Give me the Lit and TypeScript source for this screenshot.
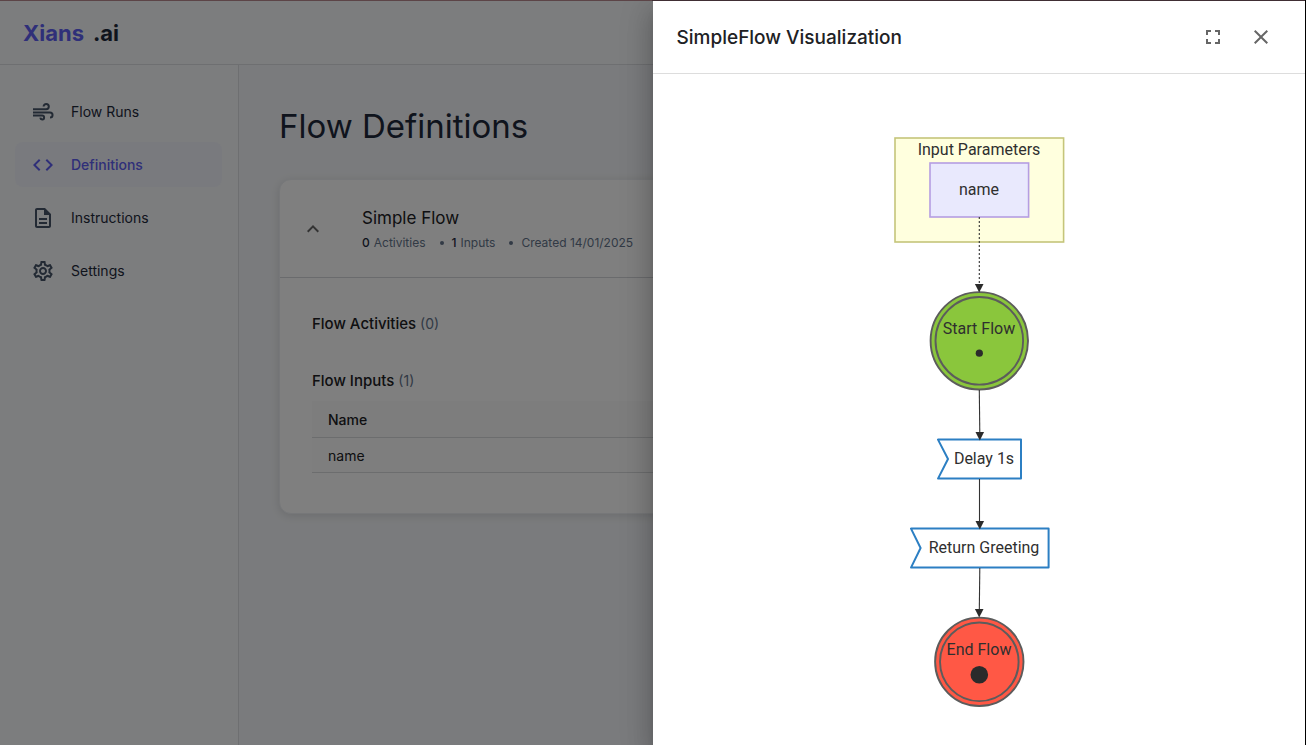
import { LitElement, html, svg, css } from "lit";
import { customElement, property } from "lit/decorators.js";
import { classMap } from "lit/directives/class-map.js";

const ICONS = {
  runs: svg`<g fill="none" stroke="currentColor" stroke-width="2"><path d="M2 9.2h13.2a2.6 2.6 0 1 0-2.6-2.6"/><path d="M2 12.4h17a2.2 2.2 0 0 1 0 5.1"/><path d="M2 15.6h9.2a1.9 1.9 0 1 1-1.9 2.1"/></g>`,
  code: svg`<path d="M9.4 16.6 4.8 12l4.6-4.6L8 6l-6 6 6 6 1.4-1.4zm5.2 0 4.6-4.6-4.6-4.6L16 6l6 6-6 6-1.4-1.4z"/>`,
  doc: svg`<path d="M8 16h8v2H8zm0-4h8v2H8zm6-10H6c-1.1 0-2 .9-2 2v16c0 1.1.89 2 1.99 2H18c1.1 0 2-.9 2-2V8l-6-6zm4 18H6V4h7v5h5v11z"/>`,
  settings: svg`<path d="M19.43 12.98c.04-.32.07-.64.07-.98s-.03-.66-.07-.98l2.11-1.65c.19-.15.24-.42.12-.64l-2-3.46c-.09-.16-.26-.25-.44-.25-.06 0-.12.01-.17.03l-2.49 1c-.52-.4-1.08-.73-1.69-.98l-.38-2.65C14.46 2.18 14.25 2 14 2h-4c-.25 0-.46.18-.49.42l-.38 2.65c-.61.25-1.17.59-1.69.98l-2.49-1c-.06-.02-.12-.03-.18-.03-.17 0-.34.09-.43.25l-2 3.46c-.13.22-.07.49.12.64l2.11 1.65c-.04.32-.07.65-.07.98s.03.66.07.98l-2.11 1.65c-.19.15-.24.42-.12.64l2 3.46c.09.16.26.25.44.25.06 0 .12-.01.17-.03l2.49-1c.52.4 1.08.73 1.69.98l.38 2.65c.03.24.24.42.49.42h4c.25 0 .46-.18.49-.42l.38-2.65c.61-.25 1.17-.59 1.69-.98l2.49 1c.06.02.12.03.18.03.17 0 .34-.09.43-.25l2-3.46c.12-.22.07-.49-.12-.64l-2.11-1.65zm-1.98-1.71c.04.31.05.52.05.73 0 .21-.02.43-.05.73l-.14 1.13.89.7 1.08.84-.7 1.21-1.27-.51-1.04-.42-.9.68c-.43.32-.84.56-1.25.73l-1.06.43-.16 1.13-.2 1.35h-1.4l-.19-1.35-.16-1.13-1.06-.43c-.43-.18-.83-.41-1.23-.71l-.91-.7-1.06.43-1.27.51-.7-1.21 1.08-.84.89-.7-.14-1.13c-.03-.31-.05-.54-.05-.74s.02-.43.05-.73l.14-1.13-.89-.7-1.08-.84.7-1.21 1.27.51 1.04.42.9-.68c.43-.32.84-.56 1.25-.73l1.06-.43.16-1.13.2-1.35h1.39l.19 1.35.16 1.13 1.06.43c.43.18.83.41 1.23.71l.91.7 1.06-.43 1.27-.51.7 1.21-1.07.85-.89.7.14 1.13zM12 8c-2.21 0-4 1.79-4 4s1.79 4 4 4 4-1.79 4-4-1.79-4-4-4zm0 6c-1.1 0-2-.9-2-2s.9-2 2-2 2 .9 2 2-.9 2-2 2z"/>`,
  chevronUp: svg`<path d="M7.41 15.41 12 10.83l4.59 4.58L18 14l-6-6-6 6z"/>`,
  fullscreen: svg`<path d="M7 14H5v5h5v-2H7v-3zm-2-4h2V7h3V5H5v5zm12 7h-3v2h5v-5h-2v3zM14 5v2h3v3h2V5h-5z"/>`,
  close: svg`<path d="M19 6.41 17.59 5 12 10.59 6.41 5 5 6.41 10.59 12 5 17.59 6.41 19 12 13.41 17.59 19 19 17.59 13.41 12z"/>`,
};

type IconName = keyof typeof ICONS;

@customElement("ui-icon")
export class UiIcon extends LitElement {
  @property() name: IconName = "code";

  static styles = css`
    :host { display: block; flex: none; width: 24px; height: 24px; }
    .glyph { display: block; width: 100%; height: 100%; fill: currentColor; }
  `;

  render() {
    return html`<svg class="glyph" viewBox="0 0 24 24" aria-hidden="true">${ICONS[this.name]}</svg>`;
  }
}

@customElement("flow-diagram")
export class FlowDiagram extends LitElement {
  static styles = css`
    :host { display: block; }
    .canvas { display: block; margin: 0 auto; }
    .label { font: 16px Roboto, "Open Sans", sans-serif; fill: #2f2f2f; text-anchor: middle; }
    .group { fill: #ffffde; stroke: #c5c57a; stroke-width: 1.6; }
    .param { fill: #e9e9fd; stroke: #b59de2; stroke-width: 1.6; }
    .edge { stroke: #333333; stroke-width: 1.1; fill: none; }
    .dotted { stroke-dasharray: 2 2; }
    .head { fill: #2b2b2b; }
    .ring { stroke: #5c5c5c; stroke-width: 1.9; }
    .start { fill: #8ac63c; }
    .end { fill: #ff5845; }
    .step { fill: #ffffff; stroke: #2c7fc3; stroke-width: 2; stroke-linejoin: round; }
  `;

  private head(x: number, y: number) {
    return svg`<path class="head" d="M${x - 4.3} ${y - 8}h8.6l-4.3 8.6z"/>`;
  }

  render() {
    return html`
      <svg class="canvas" width="180" height="585" viewBox="889 130 180 585" role="img" aria-label="SimpleFlow diagram">
        <rect class="group" x="895" y="138" width="168.6" height="104" />
        <text class="label" x="979" y="155">Input Parameters</text>
        <rect class="param" x="930" y="163" width="98.6" height="54" />
        <text class="label" x="979" y="195">name</text>
        <path class="edge dotted" d="M979.3 217V285" />
        <circle class="ring start" cx="979.3" cy="340.8" r="48.7" />
        <circle class="ring start" cx="979.3" cy="340.8" r="43.8" />
        ${this.head(979.2, 292)}
        <text class="label" x="979" y="334">Start Flow</text>
        <circle class="head" cx="979.3" cy="353.2" r="3.6" />
        <path class="edge" d="M979.3 390L979.8 434" />
        <polygon class="step" points="938,439.6 1021,439.6 1021,478.6 938,478.6 948,459" />
        ${this.head(979.8, 440)}
        <text class="label" x="984" y="464">Delay 1s</text>
        <path class="edge" d="M979.5 479V522" />
        <polygon class="step" points="911,528.6 1048.6,528.6 1048.6,567.6 911,567.6 920.6,548" />
        ${this.head(979.8, 529)}
        <text class="label" x="984" y="553">Return Greeting</text>
        <path class="edge" d="M979.8 568L979.3 611" />
        <circle class="ring end" cx="979.3" cy="661.8" r="44.2" />
        <circle class="ring end" cx="979.3" cy="661.8" r="39.3" />
        ${this.head(979.2, 617)}
        <text class="label" x="979" y="655">End Flow</text>
        <circle class="head" cx="979.3" cy="674.8" r="8.8" />
      </svg>
    `;
  }
}

const NAV: { label: string; icon: IconName; active?: boolean }[] = [
  { label: "Flow Runs", icon: "runs" },
  { label: "Definitions", icon: "code", active: true },
  { label: "Instructions", icon: "doc" },
  { label: "Settings", icon: "settings" },
];

@customElement("app-root")
export class AppRoot extends LitElement {
  static styles = css`
    :host { display: block; font-family: Inter, "Open Sans", sans-serif; color: #202124; }
    * { box-sizing: border-box; }
    .frame { display: flex; flex-direction: column; min-height: 100vh; position: relative; overflow: hidden; background: #f8fafc; border-right: 1px solid #000000; }
    .strip { height: 1px; background: linear-gradient(90deg, #5c4447 0 50%, #402e34 50%); position: relative; z-index: 3; }
    .topbar { display: flex; align-items: center; height: 64px; padding: 0 23px; border-bottom: 1px solid #dcdfe3; }
    .brand { display: flex; gap: 9px; font-size: 22px; font-weight: 700; line-height: 32px; color: #1e293b; text-decoration: none; }
    .brand-name { color: #5f5ff2; }
    .columns { display: flex; flex: 1; }
    .sidebar { flex: none; width: 239px; padding: 24px 16px 24px 15px; border-right: 1px solid #dcdfe3; }
    .nav { display: flex; flex-direction: column; gap: 8px; }
    .nav-item { display: flex; align-items: center; gap: 16px; padding: 10px 16px; border-radius: 8px; font-size: 14px; font-weight: 400; line-height: 25px; color: #1e293b; text-decoration: none; }
    .nav-item ui-icon { color: #475569; }
    .nav-item.active, .nav-item.active ui-icon { color: #5f5ff2; }
    .nav-item.active { font-weight: 500; background: #f3f5fc; }
    .main { flex: 1; min-width: 0; padding: 40px; background: #f5f7fa; }
    .page-title { margin: 0 0 32px; font-size: 33px; font-weight: 400; line-height: 42px; color: #1e293b; }
    .card { background: #ffffff; border: 1px solid #eceff3; border-radius: 12px; box-shadow: 0 2px 10px rgba(0, 0, 0, 0.12); }
    .card-head { display: flex; align-items: center; gap: 32px; padding: 24px 16px; border-bottom: 1px solid #d5d7da; }
    .icon-button { display: flex; padding: 8px; border: 0; border-radius: 50%; background: none; color: #666666; cursor: pointer; }
    .icon-button.small { padding: 5px; }
    .flow-name { margin: 0; font-size: 17px; font-weight: 400; line-height: 29px; }
    .meta { display: flex; gap: 14px; margin: 0; padding: 0; list-style: none; font-size: 12px; line-height: 20px; color: #64748b; }
    .meta-item { display: flex; align-items: center; gap: 4px; }
    .meta-item + .meta-item::before { content: ""; width: 4px; height: 4px; margin-right: 4px; border-radius: 50%; background: #64748b; }
    .count { font-weight: 500; color: #1e293b; }
    .card-body { display: flex; flex-direction: column; gap: 32px; padding: 33px 32px 40px; }
    .section-title { margin: 0; font-size: 15px; font-weight: 500; line-height: 25px; }
    .section-count { font-size: 14px; font-weight: 400; color: #64748b; }
    .inputs { width: 100%; margin-top: 8px; border-collapse: separate; border-spacing: 0; font-size: 14px; line-height: 20px; text-align: left; background: #fdfdfd; }
    .inputs th, .inputs td { border-bottom: 1px solid #d9dadd; }
    .inputs th { padding: 9px 16px 7px; font-weight: 500; background: #fafafa; }
    .inputs td { padding: 8px 16px 6px; }
    .backdrop { position: absolute; inset: 0; z-index: 1; background: rgba(0, 0, 0, 0.5); }
    .drawer { position: absolute; z-index: 2; top: 1px; right: 0; bottom: 0; width: 50%; display: flex; flex-direction: column; background: #ffffff; box-shadow: 0 8px 10px -5px rgba(0, 0, 0, 0.2), 0 16px 24px 2px rgba(0, 0, 0, 0.14), 0 6px 30px 5px rgba(0, 0, 0, 0.12); }
    .drawer-head { display: flex; align-items: center; gap: 8px; padding: 16px 24px; border-bottom: 1px solid #dddddd; }
    .drawer-title { flex: 1; margin: 0; font-size: 19px; font-weight: 500; line-height: 33px; }
    .drawer-body { flex: 1; padding-top: 56px; }
  `;

  render() {
    return html`
      <div class="frame">
        <div class="strip"></div>
        <header class="topbar">
          <a class="brand" href="#"><span class="brand-name">Xians</span><span>.ai</span></a>
        </header>
        <div class="columns">
          <aside class="sidebar">
            <nav class="nav">
              ${NAV.map((item) => html`
                <a class=${classMap({ "nav-item": true, active: !!item.active })} href="#">
                  <ui-icon name=${item.icon}></ui-icon>${item.label}
                </a>`)}
            </nav>
          </aside>
          <main class="main">
            <h1 class="page-title">Flow Definitions</h1>
            <article class="card">
              <div class="card-head">
                <button class="icon-button small" type="button" aria-label="Collapse"><ui-icon name="chevronUp"></ui-icon></button>
                <div>
                  <h2 class="flow-name">Simple Flow</h2>
                  <ul class="meta">
                    <li class="meta-item"><span class="count">0</span>Activities</li>
                    <li class="meta-item"><span class="count">1</span>Inputs</li>
                    <li class="meta-item">Created 14/01/2025</li>
                  </ul>
                </div>
              </div>
              <div class="card-body">
                <h3 class="section-title">Flow Activities <span class="section-count">(0)</span></h3>
                <section>
                  <h3 class="section-title">Flow Inputs <span class="section-count">(1)</span></h3>
                  <table class="inputs">
                    <thead><tr><th scope="col">Name</th></tr></thead>
                    <tbody><tr><td>name</td></tr></tbody>
                  </table>
                </section>
              </div>
            </article>
          </main>
        </div>
        <div class="backdrop"></div>
        <section class="drawer" role="dialog" aria-labelledby="drawer-title">
          <header class="drawer-head">
            <h2 class="drawer-title" id="drawer-title">SimpleFlow Visualization</h2>
            <button class="icon-button" type="button" aria-label="Fullscreen"><ui-icon name="fullscreen"></ui-icon></button>
            <button class="icon-button" type="button" aria-label="Close"><ui-icon name="close"></ui-icon></button>
          </header>
          <div class="drawer-body"><flow-diagram></flow-diagram></div>
        </section>
      </div>
    `;
  }
}
